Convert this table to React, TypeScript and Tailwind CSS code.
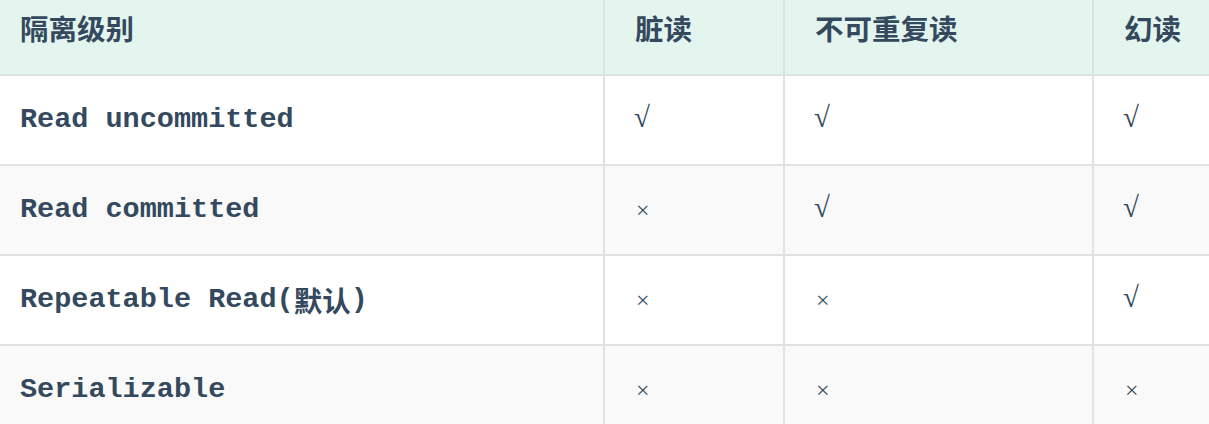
import React from "react";

type Row = { name: React.ReactNode; vals: string[] };

const rows: Row[] = [
  { name: "Read uncommitted", vals: ["√", "√", "√"] },
  { name: "Read committed", vals: ["×", "√", "√"] },
  {
    name: (
      <>
        Repeatable Read(<span className="font-['Noto_Sans_CJK_SC',sans-serif]">默认</span>)
      </>
    ),
    vals: ["×", "×", "√"],
  },
  { name: "Serializable", vals: ["×", "×", "×"] },
];

const headCls =
  "h-[74px] bg-[#e4f5ef] pt-[8px] text-[28.5px] leading-[40px] font-bold font-['Noto_Sans_CJK_SC','Noto_Sans',sans-serif]";

export default function App() {
  return (
    <div className="w-[1209px] h-[424px] overflow-hidden bg-white text-[#34495e]">
      <div className="grid grid-cols-[603px_180px_309px_1fr]">
        <div className={`${headCls} pl-[20px]`}>隔离级别</div>
        <div className={`${headCls} border-l-2 border-[#dfe2e5] pl-[30px]`}>脏读</div>
        <div className={`${headCls} border-l-2 border-[#dfe2e5] pl-[30px]`}>不可重复读</div>
        <div className={`${headCls} border-l-2 border-[#dfe2e5] pl-[30px]`}>幻读</div>
        {rows.map((r, i) => {
          const bg = i % 2 === 1 ? "bg-[#f9f9f9]" : "bg-white";
          return (
            <React.Fragment key={i}>
              <div
                className={`h-[90px] border-t-2 border-[#dfe2e5] ${bg} pl-[20px] flex items-center text-[28.5px] font-bold whitespace-nowrap font-['Liberation_Mono','Noto_Sans_CJK_SC',monospace]`}
              >
                {r.name}
              </div>
              {r.vals.map((v, j) =>
                v === "√" ? (
                  <div
                    key={j}
                    className={`h-[90px] border-t-2 border-l-2 border-[#dfe2e5] ${bg} flex items-center pl-[29px] pb-[5px] text-[29px] font-['Liberation_Serif','DejaVu_Serif',serif]`}
                  >
                    √
                  </div>
                ) : (
                  <div
                    key={j}
                    className={`h-[90px] border-t-2 border-l-2 border-[#dfe2e5] ${bg} flex items-center pl-[31px] text-[24px] font-['Liberation_Serif','DejaVu_Serif',serif]`}
                  >
                    ×
                  </div>
                )
              )}
            </React.Fragment>
          );
        })}
      </div>
    </div>
  );
}
